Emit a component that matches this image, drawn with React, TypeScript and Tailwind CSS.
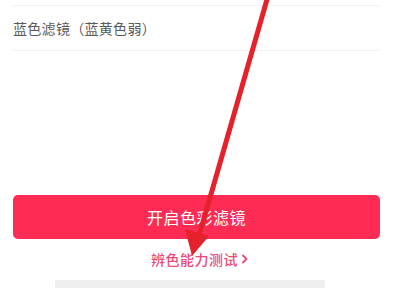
import React from "react";

const FONT = { fontFamily: '"Noto Sans CJK SC", "Noto Sans", sans-serif' };

export default function App() {
  return (
    <div className="relative w-[400px] h-[290px] overflow-hidden bg-white" style={FONT}>
      <div className="h-[5px]" />
      {/* filter option row */}
      <div className="mx-[13px] w-[366px] h-[46px] flex items-center border-t border-b border-[#f0f0f0]">
        <span className="text-[14px] leading-none text-[#595959] tracking-[0.3px]">蓝色滤镜（蓝黄色弱）</span>
      </div>

      <div className="h-[144px]" />

      {/* main button */}
      <button className="mx-[13px] w-[367px] h-[44px] rounded-[5px] bg-[#fe2c55] flex items-center justify-center text-white text-[16px] tracking-[0.5px]">
        开启色彩滤镜
      </button>

      {/* link */}
      <div className="mt-[10px] flex items-center justify-center gap-[3px] text-[14px] leading-[20px] font-medium text-[#ea4a78] tracking-[0.5px]">
        <span>辨色能力测试</span>
        <svg width="8" height="10" viewBox="0 0 8 10" fill="none">
          <path d="M2 1.5 L5.5 5 L2 8.5" stroke="#ea4a78" strokeWidth="1.8" strokeLinecap="round" strokeLinejoin="round" />
        </svg>
      </div>

      <div className="mt-[11px] ml-[55px] w-[270px] h-[8px] bg-[#efefef]" />

      {/* red annotation arrow */}
      <svg className="absolute inset-0 pointer-events-none" width="400" height="290" viewBox="0 0 400 290">
        <line x1="268" y1="-4" x2="199" y2="236" stroke="#e5212b" strokeWidth="5" strokeLinecap="round" />
        <polygon points="192,256 185,229 209,236" fill="#e5212b" />
      </svg>
    </div>
  );
}
